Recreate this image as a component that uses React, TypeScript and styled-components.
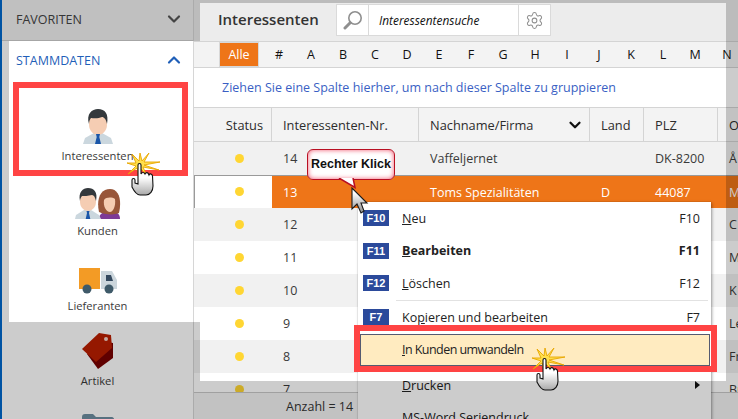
import { FC, ReactNode } from "react";
import styled, { createGlobalStyle } from "styled-components";
import { ChevronDown, ChevronUp, Settings } from "lucide-react";

const FONT = `"Open Sans", "Noto Sans", "Liberation Sans", sans-serif`;

const LETTERS = ["#", "A", "B", "C", "D", "E", "F", "G", "H", "I", "J", "K", "L", "M", "N"];
const COLUMNS = "78px 147px 171px 54px 74px 1fr";

type TRow = {
  nr: string;
  name?: string;
  land?: string;
  plz?: string;
  ort: string;
  selected?: boolean;
};

const ROWS: TRow[] = [
  { nr: "14", name: "Vaffeljernet", plz: "DK-8200", ort: "Å" },
  { nr: "13", name: "Toms Spezialitäten", land: "D", plz: "44087", ort: "M", selected: true },
  { nr: "12", ort: "C" },
  { nr: "11", ort: "M" },
  { nr: "10", ort: "K" },
  { nr: "9", ort: "Le" },
  { nr: "8", ort: "Fr" },
  { nr: "7", ort: "Br" },
];

const ManIcon = () => (
  <svg width="30" height="35" viewBox="0 0 30 35">
    <path d="M0 35 L2 29 L11 24 H19 L28 29 L30 35 Z" fill="#cbd7de" />
    <path d="M6 10 C6 3 24 3 24 10 V16 C24 22 19 26 15 26 C11 26 6 22 6 16 Z" fill="#f5cdb3" />
    <path d="M6 15 C3 5 9 0 15 0 C22 0 26 5 24 15 C23 10 21 8 19 8 C15 10 9 9 8 9 C7 10 6 12 6 15 Z" fill="#33383c" />
    <path d="M13 25 H17 L16.3 28 L18 35 H12 L13.7 28 Z" fill="#1a56a8" />
  </svg>
);

const CoupleIcon = () => (
  <svg width="46" height="31" viewBox="0 0 46 31">
    <path d="M24 31 C24 26 28 24 33 23 H37 C42 24 45 26 45 31 Z" fill="#7d3a96" />
    <path d="M24 24 C21 10 26 1 35 1 C44 1 47 12 44 25 C41 27 29 27 24 24 Z" fill="#98563a" />
    <path d="M29 12 C31 9 37 9 40 11 C41 18 38 24 35 24 C31 24 28 18 29 12 Z" fill="#f5cdb3" />
    <path d="M0 31 L1 27 L9 22 H16 L24 27 L26 31 Z" fill="#cbd7de" />
    <path d="M5 9 C5 3 21 3 21 9 V14 C21 20 16 23 13 23 C10 23 5 20 5 14 Z" fill="#f5cdb3" />
    <path d="M5 13 C3 4 8 0 13 0 C19 0 23 4 21 13 C20 9 19 7 17 7 C13 8 9 8 7 8 C6 9 5 11 5 13 Z" fill="#33383c" />
    <path d="M11.5 23 H14.5 L14 25 L15.3 31 H10.7 L12 25 Z" fill="#1a56a8" />
  </svg>
);

const TruckIcon = () => (
  <svg width="38" height="26" viewBox="0 0 38 26">
    <rect x="0" y="0" width="21" height="21" fill="#f39b25" />
    <path d="M22 3 H33 L38 12 V21 H22 Z" fill="#ccd6dc" />
    <path d="M27 7 H32 L34 13 H27 Z" fill="#34495e" />
    <circle cx="8" cy="21" r="4.5" fill="#3f5a69" />
    <circle cx="30" cy="21" r="4.5" fill="#3f5a69" />
  </svg>
);

const TagIcon = () => (
  <svg width="32" height="36" viewBox="0 0 32 36">
    <path d="M5 21 L18 8 L31 10 V25 L16 36 Z" fill="#780000" />
    <path d="M0 16 L17 0 L29 2 L30 15 L14 29 Z" fill="#bb1e00" />
    <circle cx="24" cy="6" r="2" fill="#f4d3c8" />
  </svg>
);

const FolderIcon = () => (
  <svg width="32" height="30" viewBox="0 0 32 30">
    <path d="M0 3 C0 1 1 0 3 0 H11 L14 3 H30 C31 3 32 4 32 5 V28 H0 Z" fill="#6d8ea1" />
  </svg>
);

const MirroredSearch = () => (
  <svg width="20" height="20" viewBox="0 0 20 20" fill="none" stroke="#8f8f8f">
    <circle cx="12" cy="8" r="6.2" strokeWidth="1.6" />
    <path d="M7.2 12.8 L2 18" strokeWidth="3" strokeLinecap="round" />
  </svg>
);

// thin spikes of the click burst, inner corners sit close to the centre
const BURST = "7,1 14,8 15,0 17,8 24,0 19,9 35,9 19,12 34,17 18,14 21,21 15,15 14,23 12,15 3,21 11,13 2,10 11,10";

const Hand = () => (
  <svg width="38" height="44" viewBox="0 0 38 44">
    <defs>
      <linearGradient id="handFill" x1="0" y1="0" x2="0" y2="1">
        <stop offset="0.45" stopColor="#ffffff" />
        <stop offset="1" stopColor="#a9a9a9" />
      </linearGradient>
    </defs>
    <polygon points={BURST} fill="#ffdf4d" stroke="#e8a600" strokeWidth="0.9" strokeLinejoin="miter" />
    <path
      d="M13 12 C13 10 16 10 16 12 V21 C17 19 19 19 20 21 C21 19 23 19 24 22 C25 20 27 21 27.5 23 L28 33 C28 38 25 42 21 42 H15 C12 42 9 38 7 34 L7 27 C7 25 10 25 10 27 V30 L13 31 Z"
      fill="url(#handFill)"
      stroke="#111"
      strokeWidth="1.1"
    />
  </svg>
);

const Arrow = () => (
  <svg width="18" height="28" viewBox="0 0 18 28">
    <defs>
      <linearGradient id="arrowFill" x1="0" y1="0" x2="0" y2="1">
        <stop offset="0.2" stopColor="#ffffff" />
        <stop offset="1" stopColor="#8d8d8d" />
      </linearGradient>
    </defs>
    <path d="M1 1 V22 L6 17 L10 26 L13 24 L10 16 H16 Z" fill="url(#arrowFill)" stroke="#1a1a1a" strokeWidth="1.1" />
  </svg>
);

type TNavItem = {
  id: string;
  label?: string;
  icon: ReactNode;
};

const NAV_ITEMS: TNavItem[] = [
  { id: "interessenten", label: "Interessenten", icon: <ManIcon /> },
  { id: "kunden", label: "Kunden", icon: <CoupleIcon /> },
  { id: "lieferanten", label: "Lieferanten", icon: <TruckIcon /> },
  { id: "artikel", label: "Artikel", icon: <TagIcon /> },
  { id: "ordner", icon: <FolderIcon /> },
];

type TMenuRow = {
  fkey?: string;
  before: string;
  mnemonic: string;
  after: string;
  shortcut?: string;
  bold?: boolean;
  active?: boolean;
  submenu?: boolean;
  separator?: boolean;
};

const MENU_ROWS: TMenuRow[] = [
  { fkey: "F10", before: "", mnemonic: "N", after: "eu", shortcut: "F10" },
  { fkey: "F11", before: "", mnemonic: "B", after: "earbeiten", shortcut: "F11", bold: true },
  { fkey: "F12", before: "", mnemonic: "L", after: "öschen", shortcut: "F12", separator: true },
  { fkey: "F7", before: "Ko", mnemonic: "p", after: "ieren und bearbeiten", shortcut: "F7" },
  { before: "", mnemonic: "I", after: "n Kunden umwandeln", active: true },
  { before: "", mnemonic: "D", after: "rucken", submenu: true },
  { before: "", mnemonic: "M", after: "S-Word Seriendruck" },
];

const App: FC = () => {
  return (
    <Page>
      <GlobalStyle />
      <Sidebar>
        <FavHeader>
          <span>FAVORITEN</span>
          <ChevronDown size={20} strokeWidth={2.6} color="#555" />
        </FavHeader>
        <SectionHeader>
          <span>STAMMDATEN</span>
          <ChevronUp size={20} strokeWidth={2.6} color="#1f5fb8" />
        </SectionHeader>
        <NavList>
          {NAV_ITEMS.map((item) => (
            <NavItem key={item.id}>
              <NavIcon>{item.icon}</NavIcon>
              {item.label && <NavLabel>{item.label}</NavLabel>}
            </NavItem>
          ))}
        </NavList>
      </Sidebar>

      <Content>
        <TitleBar>
          <Title>Interessenten</Title>
          <SearchGroup>
            <SearchButton><MirroredSearch /></SearchButton>
            <SearchText>Interessentensuche</SearchText>
            <SearchButton><Settings size={19} strokeWidth={1.3} color="#8f8f8f" /></SearchButton>
          </SearchGroup>
        </TitleBar>

        <AlphaBar>
          <AllButton>Alle</AllButton>
          {LETTERS.map((letter) => (
            <Letter key={letter}>{letter}</Letter>
          ))}
        </AlphaBar>

        <GroupPanel>Ziehen Sie eine Spalte hierher, um nach dieser Spalte zu gruppieren</GroupPanel>

        <HeaderRow>
          <HeaderCell $status>Status</HeaderCell>
          <HeaderCell>Interessenten-Nr.</HeaderCell>
          <HeaderCell>
            Nachname/Firma
            <SortIcon><ChevronDown size={18} strokeWidth={3} color="#111" /></SortIcon>
          </HeaderCell>
          <HeaderCell>Land</HeaderCell>
          <HeaderCell>PLZ</HeaderCell>
          <HeaderCell>O</HeaderCell>
        </HeaderRow>

        <Rows>
          {ROWS.map((row, index) => (
            <Row key={row.nr} $selected={row.selected} $stripe={index % 2 === 0}>
              <StatusCell><Dot /></StatusCell>
              <Cell $selected={row.selected}>{row.nr}</Cell>
              <Cell $selected={row.selected}>{row.name}</Cell>
              <Cell $selected={row.selected}>{row.land}</Cell>
              <Cell $selected={row.selected}>{row.plz}</Cell>
              <Cell $selected={row.selected}>{row.ort}</Cell>
            </Row>
          ))}
        </Rows>

        <Footer>Anzahl = 14</Footer>
      </Content>

      <Menu>
        {MENU_ROWS.map((item) => (
          <div key={item.after}>
            <MenuItem $bold={item.bold} $active={item.active}>
              <FKeySlot>{item.fkey && <FKey>{item.fkey}</FKey>}</FKeySlot>
              <MenuLabel $tight={item.active}>
                {item.before}
                <u>{item.mnemonic}</u>
                {item.after}
              </MenuLabel>
              {item.shortcut && <span>{item.shortcut}</span>}
              {item.submenu && <SubmenuArrow />}
            </MenuItem>
            {item.separator && <MenuSeparator />}
          </div>
        ))}
      </Menu>

      <Dim />

      <NavFrame />
      <MenuFrame />

      <Tooltip>
        Rechter Klick
        <TooltipTail width="20" height="11" viewBox="0 0 20 11">
          <path d="M1 0 L17 9.5 L15 0" fill="#fff" stroke="#b80f22" strokeWidth="1.5" />
        </TooltipTail>
      </Tooltip>
      <ArrowCursor><Arrow /></ArrowCursor>
      <NavHand><Hand /></NavHand>
      <MenuHand><Hand /></MenuHand>
    </Page>
  );
};

export default App;

const GlobalStyle = createGlobalStyle`
  html, body {
    margin: 0;
    padding: 0;
    background: #fff;
  }
  * {
    box-sizing: border-box;
  }
`;

const Page = styled.div`
  position: relative;
  display: flex;
  width: 738px;
  height: 419px;
  overflow: hidden;
  font-family: ${FONT};
  font-size: 12.5px;
  color: #333;
  background: #fff;
`;

const Sidebar = styled.div`
  display: flex;
  flex-direction: column;
  flex: 0 0 194px;
  height: 419px;
  overflow: hidden;
  border-left: 2px solid #0068cc;
  border-right: 1px solid #d6d6d6;
`;

const FavHeader = styled.div`
  display: flex;
  flex: 0 0 41px;
  align-items: center;
  justify-content: space-between;
  padding: 0 9px 2px 14px;
  background: #f0f0f0;
  border-bottom: 1px solid #d0d0d0;
  color: #444;
`;

const SectionHeader = styled.div`
  display: flex;
  flex: 0 0 38px;
  align-items: center;
  justify-content: space-between;
  padding: 0 9px 0 14px;
  color: #1f5fb8;
`;

const NavList = styled.div`
  display: flex;
  flex-direction: column;
  padding-top: 13px;
`;

const NavItem = styled.div`
  display: flex;
  flex: 0 0 75px;
  flex-direction: column;
  align-items: center;
  padding-top: 16px;
`;

const NavIcon = styled.div`
  display: flex;
  align-items: flex-end;
  justify-content: center;
  height: 36px;
  margin-bottom: 2px;
  svg {
    display: block;
  }
`;

const NavLabel = styled.div`
  height: 20px;
  line-height: 20px;
  font-size: 11.2px;
  color: #3a3a3a;
`;

const Content = styled.div`
  display: flex;
  flex-direction: column;
  flex: 1;
  min-width: 0;
  height: 419px;
`;

const TitleBar = styled.div`
  display: flex;
  flex: 0 0 42px;
  align-items: flex-end;
  padding: 0 0 5px 24px;
  background: #ececec;
  border-bottom: 1px solid #d4d4d4;
`;

const Title = styled.div`
  width: 118px;
  height: 32px;
  line-height: 31px;
  font-size: 15px;
  font-weight: 600;
  color: #333;
`;

const SearchGroup = styled.div`
  display: flex;
  height: 32px;
  background: #fff;
  border: 1px solid #dadada;
`;

const SearchButton = styled.div`
  display: flex;
  align-items: center;
  justify-content: center;
  width: 31px;
`;

const SearchText = styled.div`
  width: 151px;
  padding-left: 10px;
  line-height: 30px;
  font-size: 11.9px;
  font-style: italic;
  color: #111;
  border-left: 1px solid #dadada;
  border-right: 1px solid #dadada;
`;

const AlphaBar = styled.div`
  display: flex;
  flex: 0 0 26px;
  align-items: center;
  padding-left: 25px;
  background: #f3f3f3;
  border-bottom: 1px solid #d4d4d4;
`;

const AllButton = styled.div`
  flex: 0 0 40px;
  height: 25px;
  margin-right: 4px;
  line-height: 23px;
  text-align: center;
  color: #fff;
  background: #ee7518;
  border: 1px solid #d8d8d8;
`;

const Letter = styled.div`
  flex: 0 0 32px;
  text-align: center;
  color: #111;
`;

const GroupPanel = styled.div`
  flex: 0 0 40px;
  padding: 10px 0 0 28px;
  line-height: 20px;
  color: #3a5fc4;
  background: #fff;
  border-bottom: 1px solid #d4d4d4;
`;

const HeaderRow = styled.div`
  display: grid;
  flex: 0 0 34px;
  grid-template-columns: ${COLUMNS};
  background: #f3f3f3;
  border-bottom: 1px solid #d4d4d4;
`;

const HeaderCell = styled.div<{ $status?: boolean }>`
  display: flex;
  align-items: center;
  justify-content: ${(p) => (p.$status ? "flex-end" : "space-between")};
  padding: 0 ${(p) => (p.$status ? "8px" : "5px")} 0 ${(p) => (p.$status ? "0" : "11px")};
  font-size: 12.8px;
  font-weight: 500;
  color: #2c2c2c;
  white-space: nowrap;
  border-right: 1px solid #d4d4d4;
  &:last-child {
    border-right: 0;
  }
`;

const SortIcon = styled.span`
  display: flex;
  margin-right: 0;
`;

const Rows = styled.div`
  flex: 0 0 250px;
  overflow: hidden;
`;

const Row = styled.div<{ $selected?: boolean; $stripe?: boolean }>`
  display: grid;
  height: 33px;
  grid-template-columns: ${COLUMNS};
  background: ${(p) => (p.$selected ? "#fff" : p.$stripe ? "#f1f1f1" : "#fff")};
  box-shadow: ${(p) => (p.$selected ? "inset 1px 1px 0 #9a9a9a" : "none")};
`;

const StatusCell = styled.div`
  display: flex;
  align-items: center;
  padding-left: 41px;
`;

const Dot = styled.span`
  width: 9px;
  height: 9px;
  border-radius: 50%;
  background: #ffd633;
`;

const Cell = styled.div<{ $selected?: boolean }>`
  padding-left: 11px;
  line-height: 33px;
  white-space: nowrap;
  overflow: hidden;
  color: ${(p) => (p.$selected ? "#fff" : "#3a3a3a")};
  background: ${(p) => (p.$selected ? "#ee7518" : "transparent")};
  margin-top: ${(p) => (p.$selected ? "1px" : "0")};
`;

const Footer = styled.div`
  flex: 1;
  padding-left: 92px;
  line-height: 27px;
  color: #333;
  background: #f3f3f3;
  border-top: 1px solid #c8c8c8;
`;

const Menu = styled.div`
  position: absolute;
  left: 358px;
  top: 202px;
  width: 353px;
  height: 240px;
  background: #fff;
  box-shadow: 1px 1px 3px rgba(0, 0, 0, 0.35), 0 0 1px rgba(0, 0, 0, 0.25);
`;

const MenuItem = styled.div<{ $bold?: boolean; $active?: boolean }>`
  display: flex;
  align-items: center;
  height: 32.5px;
  padding-right: ${(p) => (p.$active ? "10px" : "11px")};
  margin: ${(p) => (p.$active ? "0 1px 3px 2px" : "0")};
  padding-left: ${(p) => (p.$active ? "3px" : "5px")};
  font-weight: ${(p) => (p.$bold ? 700 : 400)};
  color: #222;
  background: ${(p) => (p.$active ? "#ffebc0" : "transparent")};
  box-shadow: ${(p) => (p.$active ? "inset 0 0 0 1px #555a70" : "none")};
`;

const FKeySlot = styled.div`
  flex: 0 0 39px;
`;

const FKey = styled.span`
  display: block;
  width: 26px;
  height: 16px;
  line-height: 16px;
  text-align: center;
  font-family: "Liberation Sans", Arial, sans-serif;
  font-size: 11px;
  font-weight: 700;
  color: #fff;
  background: #2b4a9b;
`;

const MenuLabel = styled.div<{ $tight?: boolean }>`
  flex: 1;
  white-space: nowrap;
  letter-spacing: ${(p) => (p.$tight ? "-0.55px" : "0")};
`;

const SubmenuArrow = styled.span`
  width: 0;
  height: 0;
  border-top: 4px solid transparent;
  border-bottom: 4px solid transparent;
  border-left: 5px solid #111;
`;

const MenuSeparator = styled.div`
  height: 1px;
  margin: 0 3px 0.5px 38px;
  background: #e2e2e2;
`;

const Dim = styled.div`
  position: absolute;
  inset: 0;
  background: rgba(0, 0, 0, 0.2);
  clip-path: path(evenodd, "M0 0H738V419H0Z M9 41H200V3H726V381H200V322H9Z");
  pointer-events: none;
`;

const NavFrame = styled.div`
  position: absolute;
  left: 13px;
  top: 82px;
  width: 175px;
  height: 94px;
  border: 6px solid #ff4444;
`;

const MenuFrame = styled.div`
  position: absolute;
  left: 354px;
  top: 325px;
  width: 363px;
  height: 47px;
  border: 6px solid #ff4444;
`;

const Tooltip = styled.div`
  position: absolute;
  left: 307px;
  top: 149px;
  width: 88px;
  height: 31px;
  line-height: 28px;
  text-align: center;
  font-family: "Liberation Sans", Arial, sans-serif;
  font-size: 12.5px;
  font-weight: 700;
  color: #111;
  background: #fff;
  border: 1.5px solid #b80f22;
  border-radius: 6px;
  box-shadow: inset 0 0 5px #f0566e;
  white-space: nowrap;
`;

const TooltipTail = styled.svg`
  position: absolute;
  left: 30px;
  top: 28px;
`;

const ArrowCursor = styled.div`
  position: absolute;
  left: 351px;
  top: 187px;
  line-height: 0;
`;

const NavHand = styled.div`
  position: absolute;
  left: 125px;
  top: 153px;
  line-height: 0;
`;

const MenuHand = styled.div`
  position: absolute;
  left: 530px;
  top: 348px;
  line-height: 0;
`;
